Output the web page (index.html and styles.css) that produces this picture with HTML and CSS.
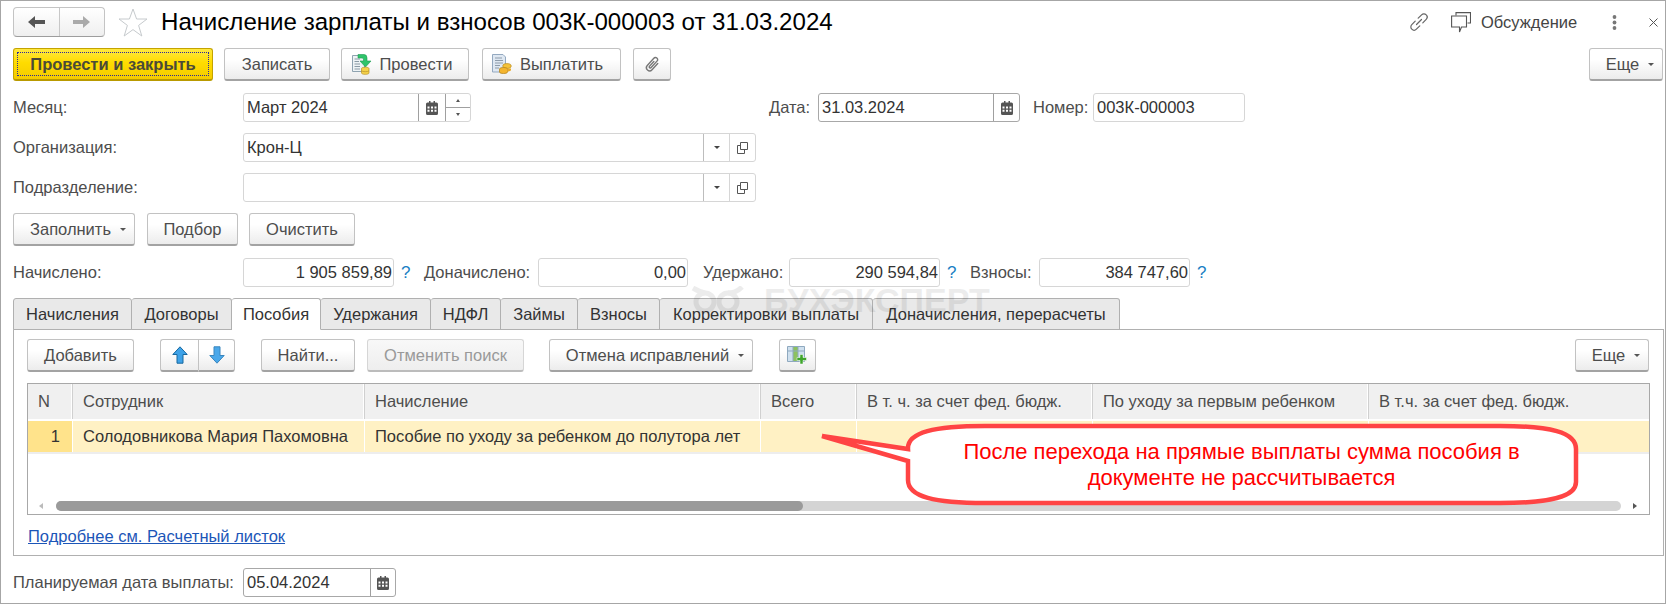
FILE: index.html
```html
<!DOCTYPE html>
<html lang="ru">
<head>
<meta charset="utf-8">
<title>Начисление зарплаты и взносов</title>
<link rel="stylesheet" href="styles.css">
</head>
<body>
<svg class="defs" width="0" height="0" aria-hidden="true">
  <defs>
    <symbol id="cal" viewBox="0 0 12 14">
      <path d="M1.5 1.5H3V0H4.5V1.5H7.5V0H9V1.5H10.5Q12 1.5 12 3V12.5Q12 14 10.5 14H1.5Q0 14 0 12.5V3Q0 1.5 1.5 1.5Z" fill="#555"/>
      <path d="M1.5 5.5h2v2h-2zM5 5.5h2v2H5zM8.5 5.5h2v2h-2zM1.5 8.8h2v2h-2zM5 8.8h2v2H5zM8.5 8.8h2v2h-2z" fill="#fff"/>
    </symbol>
    <symbol id="open" viewBox="0 0 13 13">
      <path d="M4.5 1.5H11.5V8.5H4.5Z" fill="none" stroke="#555"/>
      <path d="M4.5 4.5H1.5V12.5H8.5V8.5" fill="none" stroke="#555"/>
    </symbol>
  </defs>
</svg>
<div class="window">
  <header class="titlebar">
    <div class="nav">
      <span class="nav-cell"><svg width="17" height="12" viewBox="0 0 17 12"><path d="M0 6 7 0V4H17V8H7V12Z" fill="#555"/></svg></span>
      <span class="nav-cell"><svg width="17" height="12" viewBox="0 0 17 12"><path d="M17 6 10 0V4H0V8H10V12Z" fill="#aaa"/></svg></span>
    </div>
    <svg class="star" width="30" height="29" viewBox="0 0 30 29"><path d="M15 1 18.6 11H29L20.6 17.4 23.8 28 15 21.6 6.2 28 9.4 17.4 1 11H11.4Z" fill="#fff" stroke="#c6cacd"/></svg>
    <h1 class="title">Начисление зарплаты и взносов 003К-000003 от 31.03.2024</h1>
    <div class="title-tools">
      <svg class="ic-link" width="20" height="20" viewBox="0 0 20 20"><g fill="none" stroke="#666" stroke-width="1.2" stroke-linecap="round"><path d="M7.5 12.5 12.5 7.5"/><path d="M9.2 6.2 12.6 2.8A3.2 3.2 0 0 1 17.2 7.4L13.8 10.8"/><path d="M10.8 13.8 7.4 17.2A3.2 3.2 0 0 1 2.8 12.6L6.2 9.2"/></g></svg>
      <svg class="ic-talk" width="20" height="21" viewBox="0 0 20 21"><g fill="none" stroke="#555" stroke-width="1.1"><path d="M5 3.5V.6H19.5V11H16.5"/><path d="M.6 4H15.5V15H10.5L8.5 20V15H.6Z" fill="#fff"/></g></svg>
      <span class="talk-text">Обсуждение</span>
      <svg class="ic-dots" width="5" height="15" viewBox="0 0 5 15"><g fill="#777"><circle cx="2.5" cy="2" r="1.9"/><circle cx="2.5" cy="7.5" r="1.9"/><circle cx="2.5" cy="13" r="1.9"/></g></svg>
      <svg class="ic-x" width="9" height="9" viewBox="0 0 9 9"><path d="M.5.5 8.5 8.5M8.5.5.5 8.5" stroke="#555" stroke-width="1"/></svg>
    </div>
  </header>

  <div class="toolbar">
    <button class="btn primary w-post-close"><span class="focus">Провести и закрыть</span></button>
    <button class="btn w-save">Записать</button>
    <button class="btn w-post">
      <svg width="20" height="21" viewBox="0 0 20 21"><path d="M.5 1.5H10L12.5 4V17.5H.5Z" fill="#eef3f5" stroke="#8fa3b0"/><path d="M2.5 5H8M2.5 7.5H7M2.5 10H8M2.5 12.5H8M2.5 15H8" stroke="#8a9aa5"/><path d="M6 .5H12Q15 .5 15 4V7H19L13.5 13 8 7H11.5V5Q11.5 4 10 4H6Z" fill="#2fc46a" stroke="#1f9a50" stroke-width=".6"/><path d="M9.5 14.5C9.5 12.8 17 12.8 17 14.5V19C17 20.8 9.5 20.8 9.5 19Z" fill="#f5d24a" stroke="#b8922a" stroke-width=".7"/><path d="M9.5 16.8C10.5 18 16 18 17 16.8" fill="none" stroke="#b8922a" stroke-width=".7"/></svg>
      <span>Провести</span>
    </button>
    <button class="btn w-pay">
      <svg width="20" height="20" viewBox="0 0 20 20"><path d="M.5.5H11L13.5 3V18H.5Z" fill="#dfe8f2" stroke="#94a9c0"/><path d="M3 4H10M3 6.5H11M3 9H11M3 11.5H8M3 14H7" stroke="#8e9cab"/><ellipse cx="15" cy="12" rx="4.2" ry="2.4" fill="#f4c23a" stroke="#b98a1e" stroke-width=".7"/><path d="M7.5 15C7.5 13 15.5 13 15.5 15V18C15.5 20 7.5 20 7.5 18Z" fill="#f4b52e" stroke="#b07f1a" stroke-width=".7"/><path d="M15.5 14.5H19V16C19 17 17.5 17.5 15.5 17.5Z" fill="#e9aa28"/></svg>
      <span>Выплатить</span>
    </button>
    <button class="btn w-clip">
      <svg width="17" height="17" viewBox="0 0 16 16"><g transform="rotate(42 8 8)"><path d="M11 4V12A3 3 0 0 1 5 12V2.8A2 2 0 0 1 9 2.8V11A1 1 0 0 1 7 11V5" fill="none" stroke="#777" stroke-width="1.3" stroke-linecap="round"/></g></svg>
    </button>
    <button class="btn w-more more-top">Еще<i class="caret"></i></button>
  </div>

  <div class="row row-1">
    <label class="lbl lbl-main">Месяц:</label>
    <div class="field f-month">
      <span class="val">Март 2024</span>
      <span class="cell cell-cal"><svg width="12" height="14"><use href="#cal"/></svg></span>
      <span class="cell cell-spin"><i class="up"></i><i class="down"></i></span>
    </div>
    <label class="lbl lbl-date">Дата:</label>
    <div class="field dark f-date">
      <span class="val">31.03.2024</span>
      <span class="cell cell-cal2"><svg width="12" height="14"><use href="#cal"/></svg></span>
    </div>
    <label class="lbl lbl-num">Номер:</label>
    <div class="field f-num"><span class="val">003К-000003</span></div>
  </div>

  <div class="row row-2">
    <label class="lbl lbl-main">Организация:</label>
    <div class="field f-org">
      <span class="val">Крон-Ц</span>
      <span class="cell cell-drop"><i class="caret dark-caret"></i></span>
      <span class="cell cell-open"><svg width="13" height="13"><use href="#open"/></svg></span>
    </div>
  </div>

  <div class="row row-2">
    <label class="lbl lbl-main">Подразделение:</label>
    <div class="field f-org">
      <span class="val"></span>
      <span class="cell cell-drop"><i class="caret dark-caret"></i></span>
      <span class="cell cell-open"><svg width="13" height="13"><use href="#open"/></svg></span>
    </div>
  </div>

  <div class="toolbar toolbar-fill">
    <button class="btn w-fill">Заполнить<i class="caret"></i></button>
    <button class="btn w-pick">Подбор</button>
    <button class="btn w-clear">Очистить</button>
  </div>

  <div class="row row-totals">
    <label class="lbl lbl-main">Начислено:</label>
    <div class="field f-t1"><span class="val num">1 905 859,89</span></div>
    <span class="help">?</span>
    <label class="lbl lbl-t2">Доначислено:</label>
    <div class="field f-t2"><span class="val num">0,00</span></div>
    <label class="lbl lbl-t3">Удержано:</label>
    <div class="field f-t3"><span class="val num">290 594,84</span></div>
    <span class="help">?</span>
    <label class="lbl lbl-t4">Взносы:</label>
    <div class="field f-t4"><span class="val num">384 747,60</span></div>
    <span class="help">?</span>
  </div>

  <nav class="tabs">
    <span class="tab">Начисления</span>
    <span class="tab">Договоры</span>
    <span class="tab active">Пособия</span>
    <span class="tab">Удержания</span>
    <span class="tab">НДФЛ</span>
    <span class="tab">Займы</span>
    <span class="tab">Взносы</span>
    <span class="tab">Корректировки выплаты</span>
    <span class="tab">Доначисления, перерасчеты</span>
  </nav>

  <section class="panel">
    <div class="toolbar toolbar-panel">
      <button class="btn w-add">Добавить</button>
      <div class="btn-group">
        <button class="btn seg">
          <svg width="16" height="18" viewBox="0 0 16 18"><path d="M8 .8 15.2 8.5H11V17.2H5V8.5H.8Z" fill="#3ea2e8" stroke="#17689f"/></svg>
        </button>
        <button class="btn seg">
          <svg width="16" height="18" viewBox="0 0 16 18"><path d="M8 17.2 15.2 9.5H11V.8H5V9.5H.8Z" fill="#4aa8ea" stroke="#3a86be"/></svg>
        </button>
      </div>
      <button class="btn w-find">Найти...</button>
      <button class="btn w-cancel disabled">Отменить поиск</button>
      <button class="btn w-undo">Отмена исправлений<i class="caret"></i></button>
      <button class="btn w-tbl">
        <svg width="21" height="19" viewBox="0 0 21 19"><path d="M.5.5H17.5V15.5H.5Z" fill="#cfe0ee" stroke="#8fa9bf"/><path d="M6 1H11V15H6Z" fill="#8cc25e"/><path d="M1 5H17M6 1V15M11 1V15" stroke="#8fa9bf"/><path d="M13 8.5H16V11.5H19.5V14.5H16V18H13V14.5H10V11.5H13Z" fill="#3fa52c" stroke="#fff" stroke-width=".5"/></svg>
      </button>
      <button class="btn w-more more-panel">Еще<i class="caret"></i></button>
    </div>

    <div class="table">
      <div class="t-row t-head">
        <div class="t-cell">N</div>
        <div class="t-cell">Сотрудник</div>
        <div class="t-cell">Начисление</div>
        <div class="t-cell">Всего</div>
        <div class="t-cell">В т. ч. за счет фед. бюдж.</div>
        <div class="t-cell">По уходу за первым ребенком</div>
        <div class="t-cell">В т.ч. за счет фед. бюдж.</div>
      </div>
      <div class="t-row t-data">
        <div class="t-cell t-n">1</div>
        <div class="t-cell">Солодовникова Мария Пахомовна</div>
        <div class="t-cell">Пособие по уходу за ребенком до полутора лет</div>
        <div class="t-cell"></div>
        <div class="t-cell"></div>
        <div class="t-cell"></div>
        <div class="t-cell"></div>
      </div>
      <div class="scroll">
        <i class="sc-left"></i>
        <div class="sc-track"><div class="sc-thumb"></div></div>
        <i class="sc-right"></i>
      </div>
    </div>

    <a class="link" href="#">Подробнее см. Расчетный листок</a>
  </section>

  <div class="row row-bottom">
    <label class="lbl lbl-main">Планируемая дата выплаты:</label>
    <div class="field dark f-pay">
      <span class="val">05.04.2024</span>
      <span class="cell cell-cal3"><svg width="12" height="14"><use href="#cal"/></svg></span>
    </div>
  </div>

  <div class="watermark">
    <svg width="58" height="28" viewBox="0 0 58 28"><g fill="none" stroke="#000" stroke-width="5"><circle cx="15" cy="16" r="9"/><circle cx="38" cy="16" r="9"/><path d="M3 2Q10 6 15 7M52 1Q46 7 38 7"/></g></svg>
    <span>БУХЭКСПЕРТ</span>
  </div>

  <div class="callout">
    <svg width="765" height="90" viewBox="817 420 765 90"><path d="M908 449C907 432 935 426 985 426H1500C1550 426 1576 432 1576 449V482C1576 497 1550 503 1500 503H985C935 503 908 497 908 480V461L822 436Z" fill="#fff" stroke="#ff4444" stroke-width="4.5" stroke-linejoin="miter"/></svg>
    <p class="callout-text">После перехода на прямые выплаты сумма пособия в<br>документе не рассчитывается</p>
  </div>
</div>
</body>
</html>
```
FILE: styles.css
```css
* { box-sizing: border-box; }
html, body { margin: 0; padding: 0; background: #fff; }
body { font-family: "Liberation Sans", Arial, sans-serif; font-size: 16.5px; color: #4d4d4d; overflow: hidden; }
.defs { position: absolute; }
.window {
  position: relative; width: 1666px; height: 604px; overflow: hidden;
  border: 1px solid #a6a6a6; padding: 6px 1px 0 12px;
  display: flex; flex-direction: column;
}
.titlebar { display: flex; align-items: center; height: 30px; flex: none; }
.nav {
  display: flex; width: 92px; height: 30px; border: 1px solid #c4c4c4; border-bottom-color: #9d9d9d; border-radius: 4px;
  background: linear-gradient(#fff, #efefef);
}
.nav-cell { flex: 1; display: flex; align-items: center; justify-content: center; }
.nav-cell + .nav-cell { border-left: 1px solid #c8c8c8; }
.star { margin-left: 13px; flex: none; }
.title { margin: 0 0 0 13px; font-size: 24.1px; font-weight: 400; color: #000; white-space: nowrap; }
.title-tools { margin-left: auto; display: flex; align-items: center; padding-right: 6px; }
.talk-text { margin-left: 10px; color: #444; width: 94px; white-space: nowrap; }
.ic-talk { margin-left: 22px; }
.ic-dots { margin-left: 37px; }
.ic-x { margin-left: 32px; }

.toolbar { display: flex; margin-top: 11px; gap: 11px; flex: none; }
.btn {
  height: 33px; padding: 0; display: inline-flex; align-items: center; justify-content: center; gap: 8px;
  font: 16.5px "Liberation Sans", Arial, sans-serif; color: #4d4d4d; white-space: nowrap;
  border: 1px solid #c2c2c2; border-bottom: 2px solid #a3a3a3; border-radius: 3px;
  background: linear-gradient(#fff 35%, #ececec);
}
.primary {
  font-weight: 700; color: #4a4a38; padding: 3px;
  border: 1px solid #c4a300; border-bottom: 2px solid #b99a00;
  background: linear-gradient(#ffe940, #ffdc00 45%, #f4cb00);
}
.focus { flex: 1; align-self: stretch; display: flex; align-items: center; justify-content: center; border: 1px dotted #2a2a9a; }
.w-post-close { width: 200px; }
.w-save { width: 106px; }
.w-post { width: 128px; padding-right: 6px; }
.w-pay { width: 139px; margin-left: 2px; padding-right: 8px; }
.w-clip { width: 38px; margin-left: 1px; }
.w-more { width: 74px; gap: 0; padding-left: 8px; }
.more-top { margin-left: auto; margin-right: 1px; }
.caret { display: inline-block; width: 0; height: 0; margin-left: 9px; border: 3px solid transparent; border-top: 3.5px solid #555; border-bottom: 0; }
.dark-caret { margin: 0; border-top-color: #444; }

.row { display: flex; align-items: center; flex: none; height: 29px; }
.row-1 { margin-top: 12px; }
.row-2 { margin-top: 11px; }
.row-totals { margin-top: 12px; }
.row-bottom { margin-top: 12px; }
.lbl { white-space: nowrap; color: #4d4d4d; flex: none; }
.lbl-main { width: 230px; }
.lbl-date { margin-left: 298px; width: 49px; }
.lbl-num { margin-left: 13px; width: 60px; }
.lbl-t2 { margin-left: 13px; width: 114px; }
.lbl-t3 { margin-left: 15px; width: 86px; }
.lbl-t4 { margin-left: 13px; width: 69px; }

.field { display: flex; height: 29px; border: 1px solid #d6d6d6; border-radius: 3px; background: #fff; flex: none; color: #333; }
.field.dark { border-color: #a8a8a8; }
.val { flex: 1; padding: 0 3px 0 3px; line-height: 27px; white-space: nowrap; overflow: hidden; }
.val.num { text-align: right; padding-right: 1px; }
.cell { display: flex; align-items: center; justify-content: center; border-left: 1px solid #a0a0a0; flex: none; }
.f-month { width: 228px; }
.cell-cal { width: 27px; }
.cell-spin { width: 25px; flex-direction: column; }
.cell-spin i { flex: 1; display: flex; width: 100%; align-items: center; justify-content: center; }
.cell-spin .up::before { content: ""; border: 2.5px solid transparent; border-bottom: 3px solid #555; border-top: 0; }
.cell-spin .down { border-top: 1px solid #a0a0a0; }
.cell-spin .down::before { content: ""; border: 2.5px solid transparent; border-top: 3px solid #555; border-bottom: 0; }
.f-date { width: 202px; }
.cell-cal2 { width: 26px; }
.f-num { width: 152px; }
.f-org { width: 513px; }
.cell-drop { width: 26px; border-color: #bdbdbd; }
.cell-open { width: 26px; border-color: #d6d6d6; }
.f-t1 { width: 151px; }
.f-t2 { width: 150px; }
.f-t3 { width: 151px; }
.f-t4 { width: 151px; }
.help { color: #1a7fc4; font-size: 17px; width: 10px; margin-left: 7px; flex: none; }
.f-pay { width: 153px; }
.cell-cal3 { width: 25px; }

.toolbar-fill { margin-top: 11px; }
.w-fill { width: 122px; padding-left: 8px; gap: 0; }
.w-pick { width: 91px; margin-left: 1px; }
.w-clear { width: 106px; }

.tabs {
  margin-top: 11px; flex: none; height: 32px; display: grid;
  grid-template-columns: 119px 100px 89px 110px 70px 77px 82px 213px 247px;
  width: 1107px; position: relative; z-index: 1;
}
.tab {
  display: flex; align-items: center; justify-content: center; white-space: nowrap; color: #333;
  background: #e9e9e9; border: 1px solid #b0b0b0; border-left: 0; border-bottom: 1px solid #b0b0b0; border-radius: 3px 3px 0 0;
}
.tab:first-child { border-left: 1px solid #b0b0b0; }
.tab.active { background: #fff; border-bottom-color: #fff; }

.panel {
  height: 227px; flex: none; margin-top: -1px; border: 1px solid #b0b0b0; padding: 0 13px 0 13px;
  width: 1651px;
}
.toolbar-panel { margin-top: 9px; gap: 0; }
.w-add { width: 107px; }
.btn-group { display: flex; margin-left: 26px; }
.seg { width: 38px; }
.seg:first-child { border-radius: 3px 0 0 3px; border-right: 0; }
.seg:last-child { width: 37px; border-radius: 0 3px 3px 0; }
.w-find { width: 94px; margin-left: 26px; }
.w-cancel { width: 157px; margin-left: 12px; }
.disabled { color: #999; background: linear-gradient(#f8f8f8, #eeeeee); border-color: #d6d6d6; border-bottom-color: #bcbcbc; }
.w-undo { width: 204px; margin-left: 25px; padding-left: 8px; gap: 0; }
.w-tbl { width: 37px; margin-left: 26px; }
.more-panel { margin-left: auto; margin-right: 1px; }

.table { margin-top: 11px; width: 1623px; height: 132px; border: 1px solid #a8a8a8; display: flex; flex-direction: column; position: relative; }
.t-row { display: grid; grid-template-columns: 45px 292px 396px 96px 236px 276px 280px; flex: none; }
.t-cell { padding-left: 10px; white-space: nowrap; overflow: hidden; }
.t-head { height: 35px; background: #f0f0f0; }
.t-head .t-cell { line-height: 34px; border-right: 1px solid #d0d0d0; box-shadow: inset -1px 0 0 #fff; color: #4d4d4d; }
.t-head .t-cell:last-child { border-right: 0; box-shadow: none; }
.t-data { margin-top: 2px; height: 33px; background: #fff1c4; border-bottom: 2px solid #ededed; color: #333; }
.t-data .t-cell { line-height: 31px; border-right: 1px solid #fff; }
.t-data .t-cell:last-child { border-right: 0; }
.t-data .t-n { background: #ffe38b; text-align: right; padding: 0 12px 0 0; }
.scroll { margin-top: 47px; height: 10px; display: flex; align-items: center; }
.sc-left { width: 28px; flex: none; position: relative; }
.sc-left::before { content: ""; display: block; width: 0; margin-left: 11px; border: 3px solid transparent; border-right: 4px solid #bbb; border-left: 0; }
.sc-track { width: 1565px; height: 10px; background: #d4d4d4; border-radius: 5px; flex: none; }
.sc-thumb { width: 747px; height: 10px; background: #9a9a9a; border-radius: 5px; }
.sc-right { flex: none; margin-left: 12px; border: 3px solid transparent; border-left: 4px solid #555; border-right: 0; width: 0; }

.link { display: inline-block; margin-top: 10px; margin-left: 1px; color: #1c56b8; text-decoration: underline; line-height: 22px; }

.watermark {
  position: absolute; left: 689px; top: 282px; display: flex; align-items: center; gap: 16px;
  font-size: 34px; font-weight: 700; color: #000; opacity: .07; pointer-events: none; z-index: 3; line-height: 34px;
}
.callout { position: absolute; left: 816px; top: 419px; width: 765px; height: 90px; z-index: 4; }
.callout svg { display: block; }
.callout-text {
  position: absolute; left: 88px; right: 4px; top: 19px; margin: 0; text-align: center;
  font-size: 22px; line-height: 26px; color: #f00;
}
```
